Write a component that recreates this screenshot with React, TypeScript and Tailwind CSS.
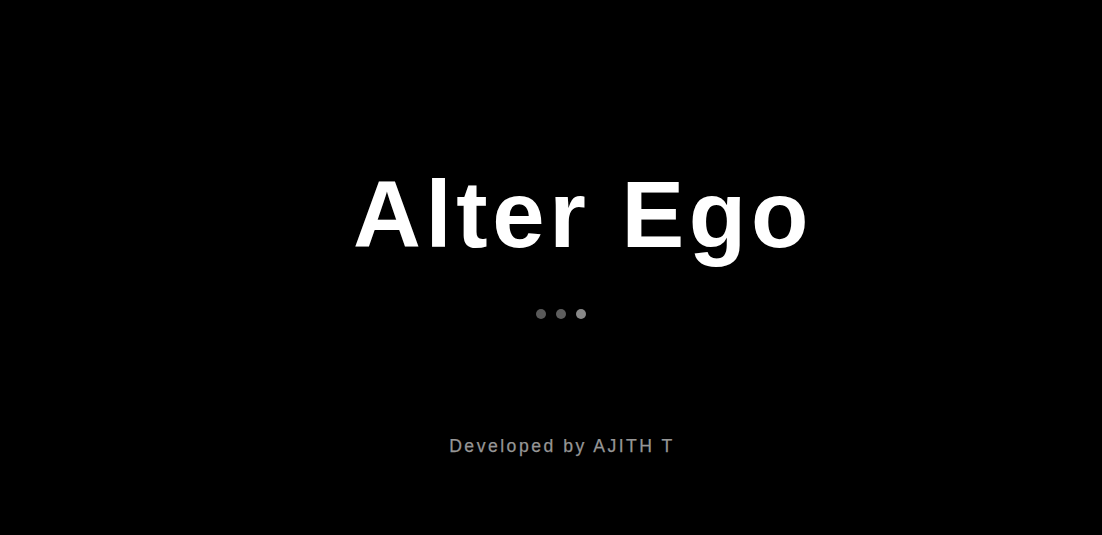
export default function App() {
  return (
    <div
      className="h-[535px] w-full bg-black flex flex-col items-center overflow-hidden"
      style={{ fontFamily: '"Liberation Sans", Arial, sans-serif' }}
    >
      <h1 className="mt-[168px] ml-[64px] text-[94px] leading-none font-bold tracking-[4.7px] text-white">
        Alter Ego
      </h1>
      <div className="mt-[47px] ml-[20px] flex gap-[10px]">
        <span className="block w-[10px] h-[10px] rounded-full bg-[#595959]" />
        <span className="block w-[10px] h-[10px] rounded-full bg-[#5e5e5e]" />
        <span className="block w-[10px] h-[10px] rounded-full bg-[#888888]" />
      </div>
      <p className="mt-[119px] ml-[22px] text-[17.6px] leading-none tracking-[2.5px] text-[#969696] [-webkit-text-stroke:0.25px_#969696]">
        Developed by AJITH T
      </p>
    </div>
  );
}
